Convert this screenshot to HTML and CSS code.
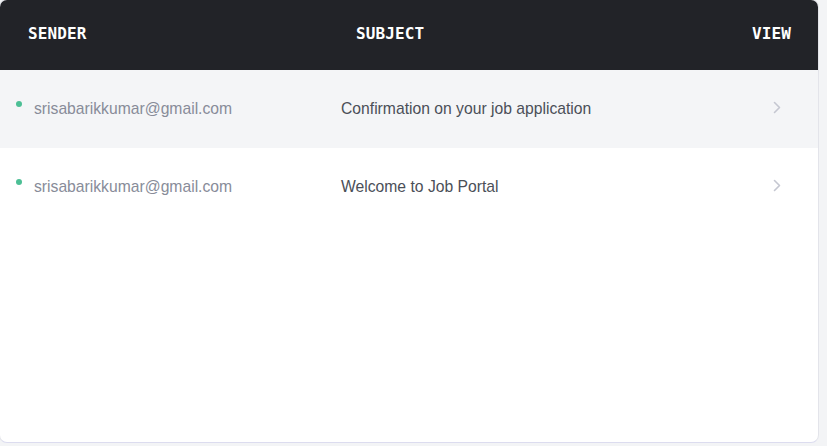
FILE: index.html
```html
<!DOCTYPE html>
<html>
<head>
<meta charset="utf-8">
<link rel="stylesheet" href="styles.css">
</head>
<body>
<div class="card">
  <div class="head">
    <div class="h-sender">SENDER</div>
    <div class="h-subject">SUBJECT</div>
    <div class="h-view">VIEW</div>
  </div>
  <div class="row alt">
    <div class="sender"><span class="dot"></span><span class="email">srisabarikkumar@gmail.com</span></div>
    <div class="subject">Confirmation on your job application</div>
    <div class="view"><svg width="8" height="13" viewBox="0 0 8 13"><path d="M1.5 1.5 L6.5 6.5 L1.5 11.5" fill="none" stroke="#c5c7d1" stroke-width="1.6" stroke-linecap="round" stroke-linejoin="round"/></svg></div>
  </div>
  <div class="row">
    <div class="sender"><span class="dot"></span><span class="email">srisabarikkumar@gmail.com</span></div>
    <div class="subject">Welcome to Job Portal</div>
    <div class="view"><svg width="8" height="13" viewBox="0 0 8 13"><path d="M1.5 1.5 L6.5 6.5 L1.5 11.5" fill="none" stroke="#c5c7d1" stroke-width="1.6" stroke-linecap="round" stroke-linejoin="round"/></svg></div>
  </div>
</div>
</body>
</html>
```
FILE: styles.css
```css
html, body {
  margin: 0;
  padding: 0;
  background: #f3f4f6;
}
.card {
  box-sizing: border-box;
  width: 820px;
  height: 444px;
  background: #ffffff;
  border: 1px solid #e3e4ea;
  border-bottom-color: #dcdcef;
  border-radius: 8px;
  overflow: hidden;
  margin-left: -1px;
  margin-top: -1px;
}
.head {
  height: 70px;
  background: #222328;
  display: grid;
  grid-template-columns: 328px 1fr auto;
  align-items: center;
  padding: 0 27px 4px 28px;
  box-sizing: border-box;
  font-family: "DejaVu Sans Mono", "Liberation Mono", monospace;
  font-weight: bold;
  font-size: 16px;
  color: #ffffff;
  letter-spacing: 0.1px;
}
.row {
  height: 78px;
  display: grid;
  grid-template-columns: 341px 1fr auto;
  align-items: center;
  padding-right: 37px;
  font-family: "Liberation Sans", Arial, sans-serif;
  font-size: 15.7px;
}
.row.alt {
  background: #f4f5f7;
}
.sender {
  display: flex;
  align-items: center;
  padding-left: 16px;
}
.dot {
  width: 6px;
  height: 6px;
  border-radius: 50%;
  background: #4cbf95;
  margin-right: 12px;
  position: relative;
  top: -5px;
}
.email {
  color: #888c99;
}
.subject {
  color: #4b4f58;
}
.view {
  display: flex;
  align-items: center;
  margin-top: -3px;
}
```
